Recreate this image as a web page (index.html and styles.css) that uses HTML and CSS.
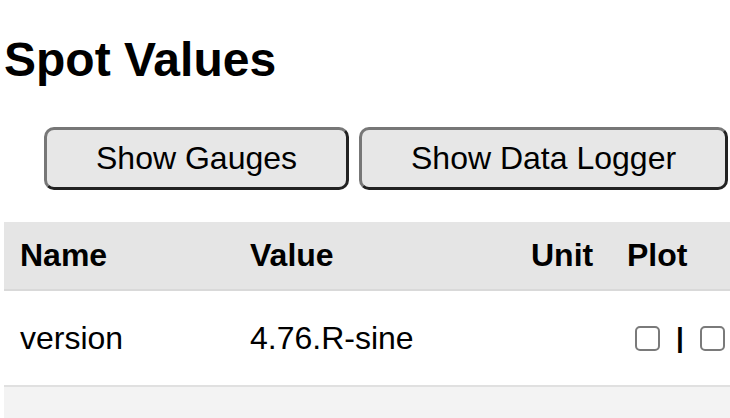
FILE: index.html
```html
<!DOCTYPE html>
<html lang="en">
<head>
    <meta charset="UTF-8">
    <meta name="viewport" content="width=device-width, initial-scale=1.0">
    <title>Spot Values</title>
    <link rel="stylesheet" href="styles.css">
</head>
<body>
    <main>
        <h1 class="title">Spot Values</h1>
        <div class="action-button">
            <button>Show Gauges</button>
            <button>Show Data Logger</button>
        </div>
        <table class="values">
            <thead>
                <tr>
                    <th class="col-name">Name</th>
                    <th class="col-value">Value</th>
                    <th class="col-unit">Unit</th>
                    <th class="col-plot">Plot</th>
                </tr>
            </thead>
            <tbody>
                <tr>
                    <td>version</td>
                    <td>4.76.R-sine</td>
                    <td class="col-unit"></td>
                    <td class="col-plot">
                        <div class="plot-wrapper">
                            <input type="checkbox" />
                            <span class="pipe">|</span>
                            <input type="checkbox" />
                        </div>
                    </td>
                </tr>
                <tr class="empty-row">
                    <td></td>
                    <td></td>
                    <td></td>
                    <td></td>
                </tr>
            </tbody>
        </table>
    </main>
</body>
</html>
```

FILE: styles.css
```css
body {
    font-family: "Liberation Sans", Arial, sans-serif;
    margin: 0;
    color: #000;
    background: #fff;
    overflow: hidden;
}
main {
    padding: 0 0 0 4px;
}
.title {
    font-size: 48px;
    line-height: 56px;
    margin: 32px 0 39px 0;
}
.action-button {
    display: flex;
    gap: 10px;
    padding-left: 40px;
}
button {
    font-family: "Liberation Sans", Arial, sans-serif;
    font-size: 32px;
    line-height: 37px;
    padding: 10px 49px;
    background-color: #e7e7e7;
    color: #000;
    border: 3px solid;
    border-color: #777 #222 #222 #777;
    border-radius: 10px;
    cursor: pointer;
}
.values {
    margin-top: 32px;
    width: 726px;
    border-collapse: collapse;
    table-layout: fixed;
    font-size: 32px;
    line-height: 37px;
}
.values th, .values td {
    padding: 0 16px;
    text-align: left;
    vertical-align: middle;
}
.values thead tr {
    background-color: #e5e5e5;
    height: 68px;
    border-bottom: 2px solid #d9d9d9;
}
.values tbody tr {
    height: 96px;
    border-bottom: 2px solid #e0e0e0;
}
.values .empty-row {
    background-color: #f3f3f3;
}
.col-name {
    width: 198px;
}
.col-value {
    width: 249px;
}
.values .col-unit {
    width: 61px;
    text-align: right;
    padding-right: 19px;
}
.plot-wrapper {
    display: flex;
    align-items: center;
    padding-left: 8px;
    gap: 16px;
}
.plot-wrapper input {
    appearance: none;
    flex: none;
    width: 25px;
    height: 25px;
    margin: 0;
    border: 2px solid #7a7a7a;
    border-radius: 5px;
    background: #fff;
}
.pipe {
    font-size: 28px;
    font-weight: bold;
    line-height: 28px;
}
```
